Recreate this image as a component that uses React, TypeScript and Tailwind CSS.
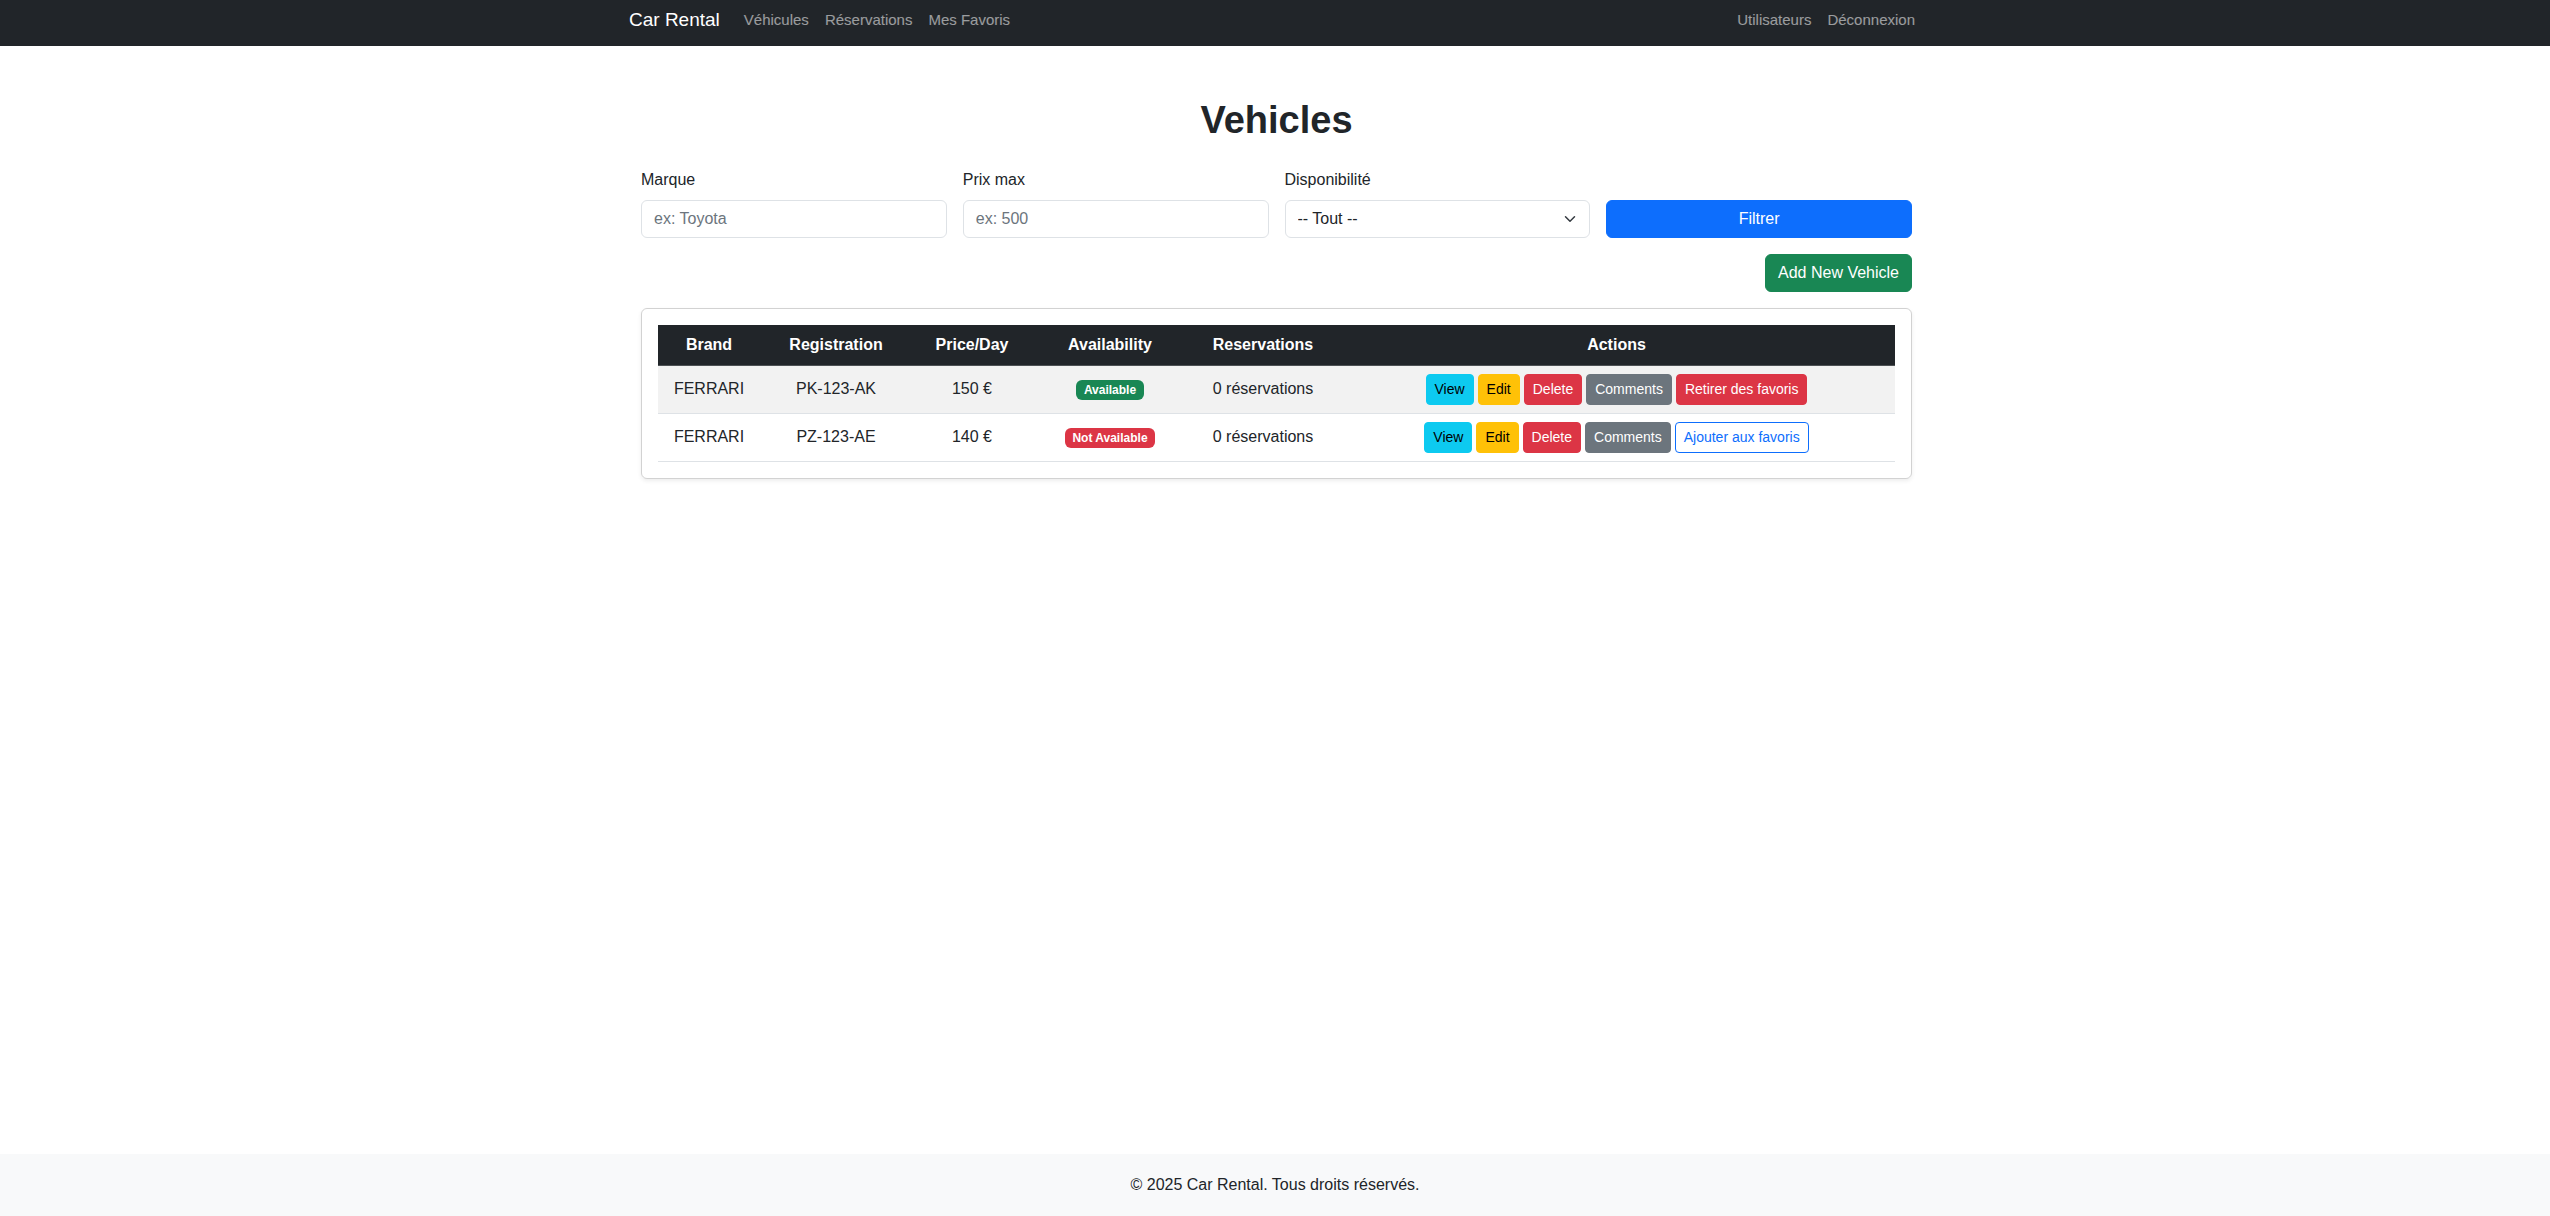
import { useState } from 'react'

type Vehicle = {
  id: number
  brand: string
  registration: string
  price: number
  available: boolean
  reservations: number
  favorite: boolean
}

const VEHICLES: Vehicle[] = [
  { id: 1, brand: 'FERRARI', registration: 'PK-123-AK', price: 150, available: true,  reservations: 0, favorite: true  },
  { id: 2, brand: 'FERRARI', registration: 'PZ-123-AE', price: 140, available: false, reservations: 0, favorite: false },
]

const LEFT_LINKS = ['Véhicules', 'Réservations', 'Mes Favoris']
const RIGHT_LINKS = ['Utilisateurs', 'Déconnexion']

function Navbar() {
  return (
    <nav className="bg-[#212529] h-[46px]">
      <div className="mx-auto w-[1320px] h-full px-3 pb-[6px] flex items-center justify-between">
        <div className="flex items-center">
          <a className="text-white text-[19px] leading-[30px] mr-4 pl-[2px]">Car Rental</a>
          <ul className="flex text-[15px]">
            {LEFT_LINKS.map(l => (
              <li key={l}><a className="block px-2 text-white/55">{l}</a></li>
            ))}
          </ul>
        </div>
        <ul className="flex text-[15px]">
          {RIGHT_LINKS.map(l => (
            <li key={l}><a className="block px-2 text-white/55">{l}</a></li>
          ))}
        </ul>
      </div>
    </nav>
  )
}

function Th({ children, className = '' }: { children: React.ReactNode; className?: string }) {
  return (
    <th className={`bg-[#212529] text-white font-bold text-center px-2 py-2 border-b border-[#4d5154] ${className}`}>
      {children}
    </th>
  )
}

function Td({ children }: { children: React.ReactNode }) {
  return <td className="px-2 py-2 text-center align-middle border-b border-[#dee2e6]">{children}</td>
}

const btnSm = 'h-[31px] px-2 text-sm leading-[21px] rounded border'

export default function App() {
  const [brand, setBrand] = useState('')
  const [maxPrice, setMaxPrice] = useState('')
  const [dispo, setDispo] = useState('')
  const [vehicles, setVehicles] = useState(VEHICLES)

  const toggleFav = (id: number) =>
    setVehicles(vs => vs.map(v => (v.id === id ? { ...v, favorite: !v.favorite } : v)))

  return (
    <div className="min-h-screen flex flex-col bg-white text-[#212529] text-base leading-normal font-['Liberation_Sans','Segoe_UI',Arial,sans-serif]">
      <Navbar />

      <main className="mx-auto w-[1320px] pl-[26px] pr-[23px]">
        <h1 className="text-center text-[38px] font-bold leading-[1.2] mt-[52px] mb-6">Vehicles</h1>

        <div className="grid grid-cols-4 gap-4 items-end mb-4">
          <div>
            <label className="block mb-2">Marque</label>
            <input
              value={brand}
              onChange={e => setBrand(e.target.value)}
              placeholder="ex: Toyota"
              className="w-full h-[38px] px-3 border border-[#dee2e6] rounded-md outline-none placeholder:text-[#6c757d]"
            />
          </div>
          <div>
            <label className="block mb-2">Prix max</label>
            <input
              value={maxPrice}
              onChange={e => setMaxPrice(e.target.value)}
              placeholder="ex: 500"
              className="w-full h-[38px] px-3 border border-[#dee2e6] rounded-md outline-none placeholder:text-[#6c757d]"
            />
          </div>
          <div>
            <label className="block mb-2">Disponibilité</label>
            <div className="relative">
              <select
                value={dispo}
                onChange={e => setDispo(e.target.value)}
                className="appearance-none w-full h-[38px] pl-3 pr-9 border border-[#dee2e6] rounded-md bg-white text-[#212529] outline-none"
              >
                <option value="">-- Tout --</option>
                <option value="1">Disponible</option>
                <option value="0">Non disponible</option>
              </select>
              <svg viewBox="0 0 16 16" className="w-4 h-3 absolute right-3 top-[13px] pointer-events-none">
                <path d="m2 5 6 6 6-6" fill="none" stroke="#343a40" strokeWidth="2" strokeLinecap="round" strokeLinejoin="round" />
              </svg>
            </div>
          </div>
          <div>
            <button className="w-full h-[38px] rounded-md bg-[#0d6efd] border border-[#0d6efd] text-white">Filtrer</button>
          </div>
        </div>

        <div className="flex justify-end mb-4">
          <button className="h-[38px] px-3 rounded-md bg-[#198754] border border-[#198754] text-white">Add New Vehicle</button>
        </div>

        <div className="border border-black/[0.175] rounded-md shadow-[0_2px_4px_rgba(0,0,0,0.075)] p-4">
          <table className="w-full table-fixed border-collapse">
            <thead>
              <tr>
                <Th className="w-[102px]">Brand</Th>
                <Th className="w-[152px]">Registration</Th>
                <Th className="w-[120px]">Price/Day</Th>
                <Th className="w-[156px]">Availability</Th>
                <Th className="w-[150px]">Reservations</Th>
                <Th>Actions</Th>
              </tr>
            </thead>
            <tbody>
              {vehicles.map((v, i) => (
                <tr key={v.id} className={i % 2 === 0 ? 'bg-[#f2f2f2]' : 'bg-white'}>
                  <Td>{v.brand}</Td>
                  <Td>{v.registration}</Td>
                  <Td>{v.price} €</Td>
                  <Td>
                    <span className={`inline-block text-xs font-bold leading-none px-[7.8px] py-[4.2px] rounded-md text-white ${v.available ? 'bg-[#198754]' : 'bg-[#dc3545]'}`}>
                      {v.available ? 'Available' : 'Not Available'}
                    </span>
                  </Td>
                  <Td>{v.reservations} réservations</Td>
                  <Td>
                    <div className="flex justify-center gap-1">
                      <button className={`${btnSm} bg-[#0dcaf0] border-[#0dcaf0] text-black`}>View</button>
                      <button className={`${btnSm} bg-[#ffc107] border-[#ffc107] text-black`}>Edit</button>
                      <button className={`${btnSm} bg-[#dc3545] border-[#dc3545] text-white`}>Delete</button>
                      <button className={`${btnSm} bg-[#6c757d] border-[#6c757d] text-white`}>Comments</button>
                      {v.favorite ? (
                        <button onClick={() => toggleFav(v.id)} className={`${btnSm} bg-[#dc3545] border-[#dc3545] text-white`}>
                          Retirer des favoris
                        </button>
                      ) : (
                        <button onClick={() => toggleFav(v.id)} className={`${btnSm} bg-transparent border-[#0d6efd] text-[#0d6efd]`}>
                          Ajouter aux favoris
                        </button>
                      )}
                    </div>
                  </Td>
                </tr>
              ))}
            </tbody>
          </table>
        </div>
      </main>

      <footer className="mt-auto bg-[#f8f9fa] h-[62px] flex items-center justify-center">
        <p>© 2025 Car Rental. Tous droits réservés.</p>
      </footer>
    </div>
  )
}
